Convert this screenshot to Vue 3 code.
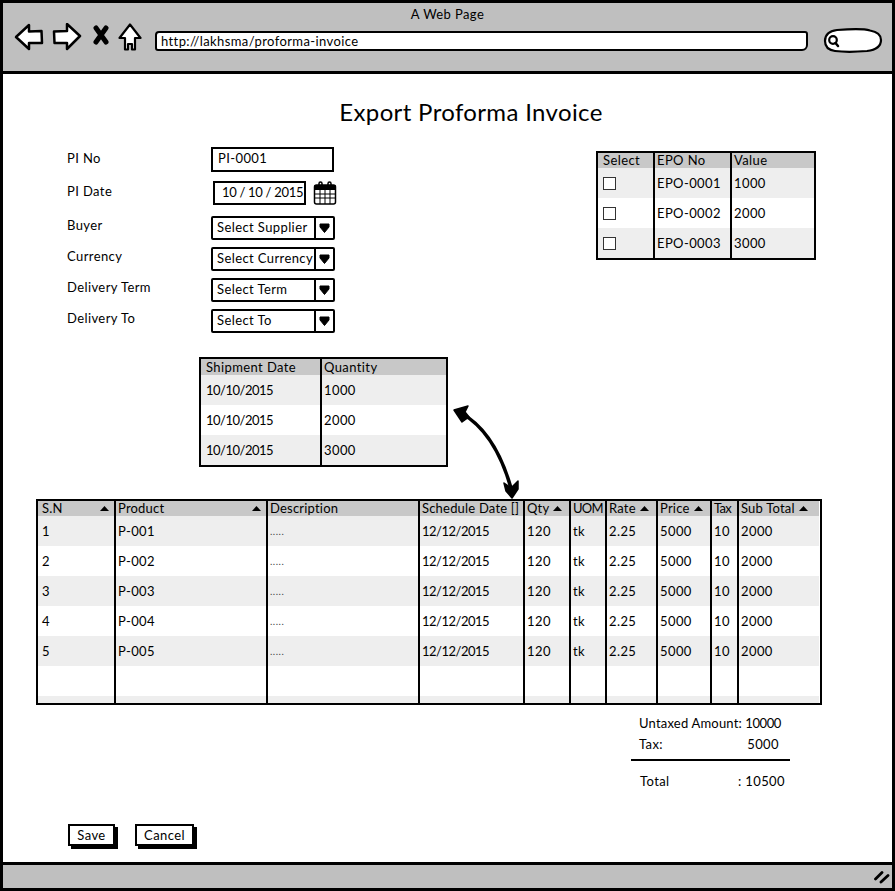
<template>
  <div class="window">
    <header class="titlebar">
      <div class="window-title">A Web Page</div>
      <div class="toolbar">
        <svg class="tool tool--back" width="30" height="28" viewBox="0 0 30 28">
          <path d="M2 14 L15 2 L15 8.500 L27.500 8 L28 20 L15 20 L15 26 Z" fill="#fff" stroke="#000" stroke-width="2.500" stroke-linejoin="round" />
        </svg>
        <svg class="tool tool--forward" width="30" height="28" viewBox="0 0 30 28">
          <path d="M28 13 L15 1 L15 8 L2 8.500 L2.500 20 L15 20 L15 26 Z" fill="#fff" stroke="#000" stroke-width="2.500" stroke-linejoin="round" />
        </svg>
        <svg class="tool tool--stop" width="16" height="20" viewBox="0 0 16 20">
          <path d="M3 3 L13 17 M13 3 L3 17" stroke="#000" stroke-width="5" stroke-linecap="round" />
        </svg>
        <svg class="tool tool--home" width="24" height="28" viewBox="0 0 24 28">
          <path d="M12 1.500 L22.500 15 L17 15 L17 26.500 L14 26.500 L14 21 L10 21 L10 26.500 L7 26.500 L7 15 L1.500 15 Z" fill="#fff" stroke="#000" stroke-width="2.200" stroke-linejoin="round" />
        </svg>
        <div class="url-bar">http://lakhsma/proforma-invoice</div>
        <svg class="tool tool--search" width="60" height="25" viewBox="0 0 60 25">
          <path d="M14 2 C28 1 42 1 47 2.500 C56 4 58 8 58 12 C58 19 52 22 44 23 C32 24 20 24 12 23 C5 22 2 18 2 13 C2 7 6 3 14 2 Z" fill="#fff" stroke="#000" stroke-width="2.200" />
          <circle cx="10" cy="12" r="3.800" fill="none" stroke="#000" stroke-width="2.200" />
          <path d="M12.500 15 L15 18" stroke="#000" stroke-width="2.500" stroke-linecap="round" />
        </svg>
      </div>
    </header>

    <main class="content">
      <h1 class="page-title">Export Proforma Invoice</h1>

      <section class="top-section">
        <div class="form">
          <label class="form-label form-label--tall">PI No</label>
          <div class="text-input">PI-0001</div>

          <label class="form-label form-label--tall">PI Date</label>
          <div class="date-field">
            <div class="date-input">10 / 10 / 2015</div>
            <svg width="24" height="24" viewBox="0 0 24 24">
              <rect x="1.500" y="4" width="21" height="19" rx="2" fill="#fff" stroke="#000" stroke-width="1.500" />
              <rect x="1.500" y="4" width="21" height="5" fill="#000" />
              <path d="M2 13 H22 M2 17 H22 M7 9 V23 M12 9 V23 M17 9 V23" stroke="#000" stroke-width="1" />
              <path d="M6 6 V2.500 A1.500 1.500 0 0 1 9 2.500 V6 M15 6 V2.500 A1.500 1.500 0 0 1 18 2.500 V6" fill="none" stroke="#000" stroke-width="1.500" />
            </svg>
          </div>

          <template v-for="item in selects" :key="item.label">
            <label class="form-label">{{ item.label }}</label>
            <div class="select">
              <span class="select-text">{{ item.value }}</span>
              <span class="select-button">
                <svg width="11" height="10" viewBox="0 0 11 10">
                  <path d="M1 1 H10 L10 4 L5.500 9.500 L1 4 Z" fill="#000" stroke="#000" stroke-linejoin="round" />
                </svg>
              </span>
            </div>
          </template>
        </div>

        <table class="grid grid--epo">
          <colgroup>
            <col class="col-epo-1" />
            <col class="col-epo-2" />
            <col />
          </colgroup>
          <thead>
            <tr>
              <th>Select</th>
              <th>EPO No</th>
              <th>Value</th>
            </tr>
          </thead>
          <tbody>
            <tr v-for="row in epoRows" :key="row.no">
              <td><span class="checkbox"></span></td>
              <td>{{ row.no }}</td>
              <td>{{ row.value }}</td>
            </tr>
          </tbody>
        </table>
      </section>

      <table class="grid grid--shipment">
        <colgroup>
          <col class="col-ship-1" />
          <col />
        </colgroup>
        <thead>
          <tr>
            <th>Shipment Date</th>
            <th>Quantity</th>
          </tr>
        </thead>
        <tbody>
          <tr v-for="row in shipmentRows" :key="row.quantity">
            <td class="date-text">{{ row.date }}</td>
            <td>{{ row.quantity }}</td>
          </tr>
        </tbody>
      </table>

      <div class="products-wrap">
        <table class="grid grid--products">
          <colgroup>
            <col v-for="column in columns" :key="column.label" :style="{ width: column.width + 'px' }" />
          </colgroup>
          <thead>
            <tr>
              <th v-for="column in columns" :key="column.label">
                <span class="head-cell" :class="{ 'head-cell--spread': column.spread, 'head-cell--tight': column.tight }">
                  <span>{{ column.label }}</span>
                  <svg v-if="column.sort" width="9" height="5" viewBox="0 0 9 5">
                    <path d="M4.500 0 L9 5 H0 Z" fill="#000" />
                  </svg>
                </span>
              </th>
            </tr>
          </thead>
          <tbody>
            <tr v-for="row in productRows" :key="row.sn">
              <td>{{ row.sn }}</td>
              <td>{{ row.product }}</td>
              <td class="dots">.....</td>
              <td class="date-text">12/12/2015</td>
              <td>120</td>
              <td>tk</td>
              <td>2.25</td>
              <td>5000</td>
              <td>10</td>
              <td>2000</td>
            </tr>
            <tr class="row-empty">
              <td v-for="column in columns" :key="column.label"></td>
            </tr>
            <tr class="row-cut">
              <td v-for="column in columns" :key="column.label"></td>
            </tr>
          </tbody>
        </table>
      </div>

      <section class="summary">
        <div class="summary-row summary-row--first">
          <span>Untaxed Amount:</span>
          <span class="summary-value">10000</span>
        </div>
        <div class="summary-row summary-row--tax">
          <span>Tax:</span>
          <span>5000</span>
        </div>
        <div class="summary-row summary-row--total">
          <span>Total</span>
          <span>: 10500</span>
        </div>
      </section>

      <div class="actions">
        <button type="button" class="btn btn--save">Save</button>
        <button type="button" class="btn btn--cancel">Cancel</button>
      </div>

      <svg class="link-arrow" width="72" height="100" viewBox="0 0 72 100">
        <path d="M10 9 C30 20 48 42 60 84" fill="none" stroke="#000" stroke-width="3.500" />
        <path d="M3 6 L17 2 L14 8 L18 13 L11 18 Z" fill="#000" stroke="#000" stroke-width="1.500" stroke-linejoin="round" />
        <path d="M53 79 L60 84 L67 77 L67 85 L61 94 L55 87 Z" fill="#000" stroke="#000" stroke-width="1.500" stroke-linejoin="round" />
      </svg>
    </main>

    <footer class="statusbar">
      <svg width="16" height="14" viewBox="0 0 16 14">
        <path d="M1.500 9 L8 2.500 M7 12 L14 5.500" stroke="#000" stroke-width="2.800" stroke-linecap="round" />
      </svg>
    </footer>
  </div>
</template>

<script setup>
const selects = [
  { label: 'Buyer', value: 'Select Supplier' },
  { label: 'Currency', value: 'Select Currency' },
  { label: 'Delivery Term', value: 'Select Term' },
  { label: 'Delivery To', value: 'Select To' },
]

const epoRows = [
  { no: 'EPO-0001', value: 1000 },
  { no: 'EPO-0002', value: 2000 },
  { no: 'EPO-0003', value: 3000 },
]

const shipmentRows = [
  { date: '10/10/2015', quantity: 1000 },
  { date: '10/10/2015', quantity: 2000 },
  { date: '10/10/2015', quantity: 3000 },
]

const columns = [
  { label: 'S.N', width: 76, sort: true, spread: true },
  { label: 'Product', width: 152, sort: true, spread: true },
  { label: 'Description', width: 152 },
  { label: 'Schedule Date []', width: 105 },
  { label: 'Qty', width: 46, sort: true },
  { label: 'UOM', width: 36, tight: true },
  { label: 'Rate', width: 51, sort: true },
  { label: 'Price', width: 54, sort: true },
  { label: 'Tax', width: 27, tight: true },
  { label: 'Sub Total', width: 82, sort: true },
]

const productRows = [
  { sn: 1, product: 'P-001' },
  { sn: 2, product: 'P-002' },
  { sn: 3, product: 'P-003' },
  { sn: 4, product: 'P-004' },
  { sn: 5, product: 'P-005' },
]
</script>

<style scoped>
.window {
  position: relative;
  width: 895px;
  height: 891px;
  display: flex;
  flex-direction: column;
  border: 3px solid #000;
  box-sizing: border-box;
  overflow: hidden;
  background: #fff;
  color: #000;
  font-family: Lato, "Open Sans", sans-serif;
  font-size: 13px;
  letter-spacing: 0.4px;
}

.titlebar {
  flex: none;
  height: 71px;
  box-sizing: border-box;
  border-bottom: 3px solid #000;
  background: #bfbfbf;
}

.window-title {
  height: 16px;
  margin-top: 3px;
  line-height: 16px;
  text-align: center;
}

.toolbar {
  display: flex;
  align-items: flex-start;
  height: 28px;
  margin-top: 1px;
  padding-left: 11px;
}

.tool {
  flex: none;
}

.tool--forward {
  margin-left: 8px;
}

.tool--stop {
  margin-left: 11px;
  margin-top: 2px;
}

.tool--home {
  margin-left: 9px;
}

.url-bar {
  flex: none;
  width: 653px;
  height: 20px;
  margin-left: 13px;
  margin-top: 8px;
  padding-left: 4px;
  box-sizing: border-box;
  border: 2px solid #000;
  border-radius: 4px 3px 6px 3px;
  background: #fff;
  line-height: 16px;
}

.tool--search {
  margin-left: 15px;
  margin-top: 5px;
}

.content {
  position: relative;
  flex: 1;
  padding-left: 33px;
}

.page-title {
  margin: 22px 0 0;
  height: 32px;
  padding-left: 14px;
  font-size: 24px;
  font-weight: 400;
  line-height: 32px;
  letter-spacing: 0.35px;
  text-align: center;
}

.top-section {
  display: flex;
  align-items: flex-start;
  margin-top: 19px;
  margin-left: 31px;
}

.form {
  flex: none;
  width: 529px;
  display: grid;
  grid-template-columns: 144px 1fr;
  grid-template-rows: 33px 36px 31px 31px 31px 31px;
}

.form-label {
  padding-top: 1px;
  line-height: 16px;
}

.form-label--tall {
  padding-top: 3px;
}

.text-input {
  width: 123px;
  height: 25px;
  padding-left: 5px;
  box-sizing: border-box;
  border: 2.500px solid #000;
  line-height: 18px;
}

.date-field {
  display: flex;
  align-items: flex-start;
  gap: 7px;
  margin-left: 2px;
  margin-top: 1px;
}

.date-input {
  width: 93px;
  height: 24px;
  padding-left: 7px;
  box-sizing: border-box;
  border: 2.500px solid #000;
  line-height: 18px;
  letter-spacing: -0.3px;
  white-space: nowrap;
}

.select {
  display: flex;
  width: 124px;
  height: 24px;
  box-sizing: border-box;
  border: 2px solid #000;
  border-radius: 2px;
  line-height: 18px;
}

.select-text {
  flex: 1;
  padding-left: 4px;
  white-space: nowrap;
}

.select-button {
  flex: none;
  width: 17px;
  display: flex;
  align-items: center;
  justify-content: center;
  border-left: 2px solid #000;
}

.grid {
  border-collapse: separate;
  border-spacing: 0;
  table-layout: fixed;
  box-sizing: border-box;
  border: 2.500px solid #000;
  background: #fff;
}

.grid th {
  height: 15px;
  padding: 0 0 0 5px;
  background: #c8c8c8;
  font-weight: 400;
  line-height: 15px;
  text-align: left;
  white-space: nowrap;
}

.grid td {
  height: 30px;
  padding: 0 0 0 5px;
  box-sizing: border-box;
  line-height: 16px;
  vertical-align: middle;
}

.grid th + th,
.grid td + td {
  border-left: 2px solid #000;
  padding-left: 2px;
}

.grid tbody tr:nth-child(odd) td {
  background: #eee;
}

.date-text {
  letter-spacing: -0.5px;
}

.grid--epo {
  width: 220px;
  margin-top: 4px;
}

.col-epo-1 {
  width: 55px;
}

.col-epo-2 {
  width: 77px;
}

.checkbox {
  display: block;
  width: 11px;
  height: 11px;
  border: 1px solid #333;
  background: #fff;
}

.grid--shipment {
  width: 249px;
  margin-top: 17px;
  margin-left: 163px;
}

.grid--shipment th {
  height: 16px;
}

.col-ship-1 {
  width: 119px;
}

.products-wrap {
  height: 206px;
  width: 786px;
  margin-top: 32px;
  box-sizing: border-box;
  border: 2.500px solid #000;
  overflow: hidden;
}

.grid--products {
  width: 781px;
  border: 0;
}

.grid--products th:first-child,
.grid--products td:first-child {
  padding-left: 4px;
}

.head-cell {
  display: flex;
  align-items: center;
  gap: 4px;
  letter-spacing: 0.2px;
}

.head-cell--spread {
  justify-content: space-between;
  padding-right: 5px;
}

.head-cell--tight {
  letter-spacing: -0.7px;
}

.dots {
  font-size: 10px;
  letter-spacing: 0.5px;
  color: #444;
  vertical-align: bottom;
}

.grid--products tbody tr.row-empty td {
  background: #fff;
}

.grid--products tbody tr.row-cut td {
  background: #eee;
  height: 8px;
}

.summary {
  width: 159px;
  margin-top: 10px;
  margin-left: 595px;
}

.summary-row {
  display: flex;
  justify-content: space-between;
  height: 16px;
  line-height: 16px;
  padding-left: 8px;
  white-space: nowrap;
}

.summary-row--first {
  padding-right: 9px;
  letter-spacing: 0.2px;
}

.summary-value {
  letter-spacing: -0.4px;
}

.summary-row--tax {
  margin-top: 5px;
  padding-right: 11px;
  padding-bottom: 7px;
  border-bottom: 2px solid #000;
}

.summary-row--total {
  margin-top: 12px;
  padding-right: 5px;
  padding-left: 9px;
}

.actions {
  display: flex;
  gap: 20px;
  margin-top: 35px;
  margin-left: 32px;
}

.btn {
  height: 22px;
  padding: 0;
  box-sizing: border-box;
  border: 2px solid #000;
  background: #fff;
  box-shadow: 3px 3px 0 #000;
  color: #000;
  font: inherit;
  letter-spacing: inherit;
  line-height: 16px;
}

.btn--save {
  width: 47px;
}

.btn--cancel {
  width: 59px;
}

.link-arrow {
  position: absolute;
  left: 448px;
  top: 330px;
}

.statusbar {
  flex: none;
  height: 26px;
  display: flex;
  align-items: center;
  justify-content: flex-end;
  padding-right: 2px;
  box-sizing: border-box;
  border-top: 3px solid #000;
  background: #bfbfbf;
}
</style>

<style>
body {
  margin: 0;
  background: #fff;
}
</style>
